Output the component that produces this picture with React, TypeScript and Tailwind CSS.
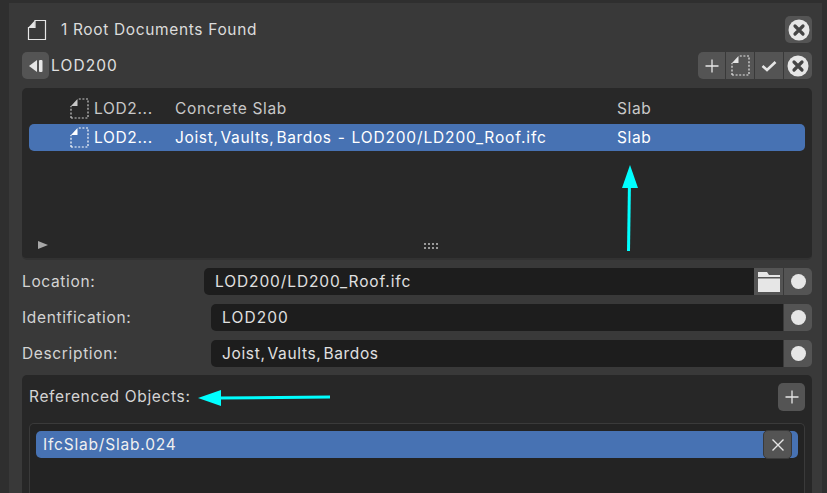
import React from 'react'

const CircleX = () => (
  <svg width="22" height="22" viewBox="0 0 22 22">
    <circle cx="11" cy="11" r="10.5" fill="#e6e6e6" />
    <path d="M7 7l8 8M15 7l-8 8" stroke="#444" strokeWidth="3.2" strokeLinecap="round" />
  </svg>
)

const Plus = () => (
  <svg width="16" height="16" viewBox="0 0 16 16">
    <path d="M8 1.5v13M1.5 8h13" stroke="#e6e6e6" strokeWidth="1.3" />
  </svg>
)

const Dot = () => (
  <button className="w-[28px] ml-px h-full bg-[#545454] rounded-r-[5px] flex items-center justify-center shrink-0">
    <span className="w-[15px] h-[15px] rounded-full bg-[#e6e6e6]" />
  </button>
)

// root document glyph (solid outline)
const DocIcon = () => (
  <svg width="20" height="22" viewBox="0 0 20 22" fill="none">
    <path d="M1.5 20.5V8.5h6.5V1.5h10.5v19z" stroke="#e6e6e6" strokeWidth="1.2" />
    <path d="M1.5 8.2L7.8 1.5V8.2z" fill="#e6e6e6" />
  </svg>
)

const DashedDoc = ({ color }: { color: string }) => (
  <svg width="19" height="21" viewBox="0 0 19 21" fill="none">
    <path d="M1 20V8M1 20h17V1H8" stroke={color} strokeWidth="1.2" strokeDasharray="2 1.6" />
    <path d="M1 8L7.5 1V8z" fill={color} />
  </svg>
)

const ListRow = ({ name, desc, kind, active }: { name: string; desc: React.ReactNode; kind: string; active?: boolean }) => (
  <div className={`h-[27px] flex items-center rounded-[5px] ${active ? 'bg-[#4772b3] text-white' : 'text-[#c8c8c8]'}`}>
    <span className="w-[41px] shrink-0" />
    <DashedDoc color={active ? '#ffffff' : '#c8c8c8'} />
    <span className="ml-[5px] w-[81px] shrink-0">{name}</span>
    <span className="w-[442px] shrink-0">{desc}</span>
    <span>{kind}</span>
  </div>
)

const FieldRow = ({ label, value, labelWidth, children }: { label: string; value: React.ReactNode; labelWidth: string; children?: React.ReactNode }) => (
  <div className="h-[27px] flex items-center">
    <span className={`${labelWidth} shrink-0 text-[#d4d4d4]`}>{label}</span>
    <div className="flex-1 h-full flex">
      <div className="flex-1 bg-[#1d1d1d] rounded-l-[5px] px-[11px] flex items-center text-[#e0e0e0]">{value}</div>
      {children}
      <Dot />
    </div>
  </div>
)

export default function App() {
  return (
    <div className="relative w-[827px] h-[493px] overflow-hidden flex bg-[#2f2f2f] text-[15.5px] tracking-[0.65px] leading-none font-['Inter','Liberation_Sans',sans-serif]">
      <div className="w-[9px] shrink-0" />
      <div className="w-[813px] shrink-0 mt-[3px] bg-[#393939] pl-[13px] pr-[10px] flex flex-col">
        <div className="h-[27px] mt-[13px] flex items-center justify-between">
          <div className="flex items-center">
            <span className="ml-[5px]"><DocIcon /></span>
            <span className="ml-[14px] text-[#dcdcdc]">1 Root Documents Found</span>
          </div>
          <button className="w-[27px] h-[27px] bg-[#545454] rounded-[5px] flex items-center justify-center">
            <CircleX />
          </button>
        </div>

        <div className="h-[27px] mt-[9px] flex items-center justify-between">
          <div className="flex items-center">
            <button className="w-[27px] h-[27px] bg-[#545454] rounded-[5px] flex items-center justify-center">
              <svg width="16" height="14" viewBox="0 0 16 14">
                <path d="M9 1v12L1 7z" fill="#e6e6e6" />
                <rect x="11" y="1" width="3.5" height="12" rx="1" fill="#e6e6e6" />
              </svg>
            </button>
            <span className="ml-[2px] text-[#e0e0e0] tracking-[1.1px]">LOD200</span>
          </div>
          <div className="flex gap-px">
            <button className="w-[27px] h-[27px] bg-[#545454] rounded-l-[5px] flex items-center justify-center"><Plus /></button>
            <button className="w-[28px] h-[27px] bg-[#545454] flex items-center justify-center"><DashedDoc color="#e6e6e6" /></button>
            <button className="w-[28px] h-[27px] bg-[#545454] flex items-center justify-center">
              <svg width="16" height="12" viewBox="0 0 16 12"><path d="M1.5 6l4.5 4 8.5-8" stroke="#e6e6e6" strokeWidth="2.6" fill="none" /></svg>
            </button>
            <button className="w-[28px] h-[27px] bg-[#545454] rounded-r-[5px] flex items-center justify-center"><CircleX /></button>
          </div>
        </div>

        <div className="h-[172px] mt-[9px] bg-[#282828] rounded-[5px] border-b-2 border-[#323232] px-[7px] pt-[7px] flex flex-col gap-[2px] relative">
          <ListRow name="LOD2..." desc="Concrete Slab" kind="Slab" />
          <ListRow
            name="LOD2..."
            desc={
              <>
                <span className="[word-spacing:-3px]">Joist, Vaults, Bardos</span>
                <span className="[word-spacing:1px]"> - </span>
                <span className="tracking-[0.85px]">LOD200/LD200_Roof.ifc</span>
              </>
            }
            kind="Slab"
            active
          />
          <div className="mt-auto mb-[8px] flex items-center relative h-[10px]">
            <svg className="ml-[9px]" width="10" height="8" viewBox="0 0 10 8"><path d="M0 0l10 4-10 4z" fill="#a8a8a8" /></svg>
            <span className="absolute left-[394px] top-[2px] w-[16px] h-[7px] bg-[radial-gradient(circle,#9a9a9a_1px,transparent_1px)] bg-[length:4px_4px]" />
          </div>
        </div>

        <div className="mt-[8px] flex flex-col gap-[9px]">
          <FieldRow label="Location:" value={<span className="tracking-[0.9px]">LOD200/LD200_Roof.ifc</span>} labelWidth="w-[182px]">
            <button className="w-[29px] bg-[#545454] flex items-center justify-center">
              <svg width="22" height="20" viewBox="0 0 22 20">
                <path d="M0 0h9l2 3h11v2H0z" fill="#e6e6e6" />
                <path d="M0 6.5h22V20H0z" fill="#e6e6e6" />
              </svg>
            </button>
          </FieldRow>
          <FieldRow label="Identification:" value={<span className="tracking-[1.1px]">LOD200</span>} labelWidth="w-[189px]" />
          <FieldRow label="Description:" value={<span className="[word-spacing:-3px]">Joist, Vaults, Bardos</span>} labelWidth="w-[189px]" />
        </div>

        <div className="mt-[8px] flex-1 bg-[#272727] rounded-t-[5px] px-[7px] flex flex-col">
          <div className="h-[28px] mt-[8px] flex items-center justify-between">
            <span className="text-[#d4d4d4]">Referenced Objects:</span>
            <button className="w-[27px] h-[28px] bg-[#545454] rounded-[5px] flex items-center justify-center"><Plus /></button>
          </div>
          <div className="mt-[12px] flex-1 bg-[#232323] border-t border-x border-[#3a3a3a] rounded-t-[5px] px-[6px] pt-[7px]">
            <div className="relative h-[27px] bg-[#4772b3] rounded-[5px] flex items-center pl-[7px] text-[#f0f0f0] tracking-[0.8px]">
              IfcSlab/Slab.024
              <button className="absolute right-[6px] -top-px w-[29px] h-[29px] bg-[#545454] border border-[#3a3a3a] rounded-[5px] flex items-center justify-center">
                <svg width="14" height="14" viewBox="0 0 14 14"><path d="M1.5 1.5l11 11M12.5 1.5l-11 11" stroke="#e6e6e6" strokeWidth="1.4" /></svg>
              </button>
            </div>
          </div>
        </div>
      </div>

      {/* annotation arrows on top of the screenshot */}
      <svg className="absolute left-0 top-0 pointer-events-none" width="827" height="493" viewBox="0 0 827 493">
        <path d="M628.5 251l1-70" stroke="#00ffff" strokeWidth="3" />
        <path d="M630 165l-8 23h16z" fill="#00ffff" />
        <path d="M330 397l-112 1" stroke="#00ffff" strokeWidth="3" />
        <path d="M198 398l23-8v16z" fill="#00ffff" />
      </svg>
    </div>
  )
}
